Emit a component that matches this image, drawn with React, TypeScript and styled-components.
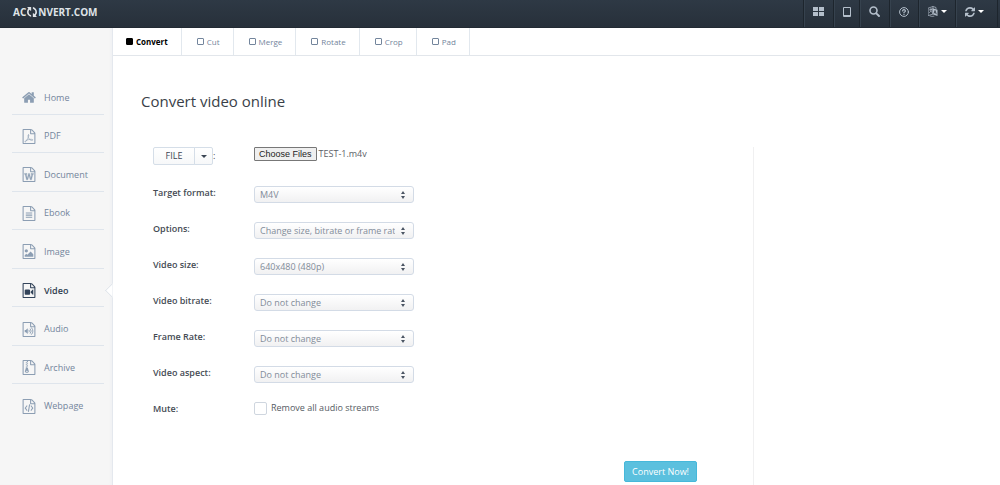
import React from "react";
import styled, { createGlobalStyle, css } from "styled-components";

const GlobalStyle = createGlobalStyle`
  * { box-sizing: border-box; }
  body { margin: 0; background: #fff; color: #3f4650; font: 9px/18px "Open Sans", "Noto Sans", sans-serif; }
  button, input, select { font: inherit; color: inherit; margin: 0; }
  a { color: inherit; text-decoration: none; }
`;

const Page = styled.div`
  display: flex;
  flex-direction: column;
  min-height: 100vh;
`;

const TopBar = styled.header`
  display: flex;
  justify-content: space-between;
  align-items: stretch;
  height: 28px;
  padding: 0 2px 0 13px;
  background: linear-gradient(#2e3945, #27303a);
  border-bottom: 1px solid #222a33;
  color: #b4bfcb;
`;

const Logo = styled.a`
  display: flex;
  align-items: center;
  padding-bottom: 4px;
  font-size: 10px;
  font-weight: 700;
  color: #dfe3e7;
  svg { margin: 0 1px; }
`;

const Tools = styled.div`
  display: flex;
`;

const Tool = styled.button<{ $width: number }>`
  display: flex;
  align-items: center;
  justify-content: center;
  gap: 3px;
  width: ${(p) => p.$width}px;
  padding: 0 0 4px;
  border: 0;
  border-left: 1px solid #1d252d;
  box-shadow: inset 1px 0 0 #36424e;
  background: none;
  &:last-child { padding-right: 5px; border-right: 1px solid #1d252d; }
`;

const Caret = styled.span`
  border: 3px solid transparent;
  border-top-color: currentColor;
  border-bottom: 0;
`;

const WhiteCaret = styled(Caret)`
  color: #fff;
`;

const Body = styled.div`
  display: flex;
  flex: 1;
`;

const Sidebar = styled.nav`
  flex: 0 0 113px;
  padding: 48px 8px 0 12px;
  background: #f6f6f6;
  border-right: 1px solid #e4e8ee;
  box-shadow: inset -2px 0 2px #f1f2f4;
`;

const NavList = styled.ul`
  display: grid;
  grid-auto-rows: 1fr;
  min-height: 347px;
  margin: 0;
  padding: 0;
  list-style: none;
`;

const NavItem = styled.li`
  position: relative;
  display: flex;
  border-bottom: 1px solid #dfe5ec;
  &:last-child { border-bottom-color: transparent; }
`;

const NavLink = styled.a<{ $active?: boolean }>`
  display: flex;
  align-items: center;
  gap: 8px;
  flex: 1;
  padding: 6px 0 0 10px;
  color: #73859c;
  svg { flex: none; color: #8c9eb3; }
  ${(p) => p.$active && css`
    color: #2f3d4f;
    font-weight: 600;
    svg { color: #33445a; }
  `}
`;

const Notch = styled.span`
  position: absolute;
  top: 16px;
  right: -14px;
  width: 11px;
  height: 11px;
  background: #fff;
  border-left: 1px solid #dfe4ea;
  border-bottom: 1px solid #dfe4ea;
  clip-path: polygon(0 0, 100% 100%, 0 100%);
  transform: rotate(45deg);
`;

const Main = styled.main`
  flex: 1;
  min-width: 0;
`;

const Tabs = styled.nav`
  display: flex;
  height: 28px;
  border-bottom: 1px solid #e2e6eb;
`;

const Tab = styled.a<{ $active?: boolean }>`
  display: flex;
  align-items: center;
  gap: 3px;
  padding: 0 13px 0 15px;
  border-right: 1px solid #e2e8ee;
  color: #73859c;
  font-size: 8px;
  &:first-child { padding: 0 13px; }
  ${(p) => p.$active && css`
    color: #000;
    font-weight: 700;
  `}
`;

const TabMark = styled.span<{ $active?: boolean }>`
  width: 7px;
  height: 7px;
  border: 1px solid currentColor;
  border-radius: 1px;
  background: ${(p) => (p.$active ? "currentColor" : "transparent")};
`;

const Title = styled.h1`
  margin: 0;
  padding: 34px 28px 0;
  font-size: 15px;
  line-height: 22px;
  font-weight: 400;
  color: #3a3f48;
`;

const Content = styled.div`
  display: grid;
  grid-template-columns: 641fr 246fr;
  padding-top: 35px;
`;

const Form = styled.form`
  display: flex;
  flex-direction: column;
  min-height: 338px;
  padding: 0 56px 0 40px;
  border-right: 1px solid #f0f0f1;
`;

const Row = styled.div`
  display: grid;
  grid-template-columns: 101px 1fr;
  align-items: start;
  min-height: 36px;
`;

const Label = styled.label`
  padding-top: 1px;
  font-weight: 600;
  color: #454b54;
`;

const FileGroup = styled.div`
  display: flex;
  align-items: center;
`;

const SourceButton = styled.button`
  height: 18px;
  width: 42px;
  padding: 0;
  line-height: 16px;
  border: 1px solid #d5dee8;
  border-radius: 2px 0 0 2px;
  background: linear-gradient(#fff, #f7f8f9);
  color: #3b4654;
`;

const SourceMenu = styled(SourceButton)`
  display: flex;
  align-items: center;
  justify-content: center;
  width: 19px;
  margin-left: -1px;
  border-radius: 0 2px 2px 0;
`;

const FileField = styled.div`
  display: flex;
  align-items: center;
  gap: 2px;
  height: 14px;
  color: #5c6168;
`;

const HiddenFile = styled.input`
  position: absolute;
  width: 1px;
  height: 1px;
  opacity: 0;
`;

const ChooseLabel = styled.label`
  height: 14px;
  padding: 0 4px;
  border: 1px solid #777;
  border-radius: 1px;
  background: #efefef;
  color: #222;
  font: 9px/12px "Liberation Sans", Arial, sans-serif;
  white-space: nowrap;
`;

const SelectBox = styled.div`
  display: grid;
  align-items: center;
  width: 160px;
  margin-top: 3px;
  > * { grid-area: 1 / 1; }
  svg { justify-self: end; margin-right: 9px; color: #4b5563; pointer-events: none; }
`;

const Select = styled.select`
  appearance: none;
  width: 100%;
  height: 17px;
  padding: 0 18px 0 5px;
  border: 1px solid #d3dbe6;
  border-radius: 3px;
  background: linear-gradient(#fff, #f1f1f2);
  color: #828c99;
  line-height: 15px;
`;

const CheckLabel = styled.label`
  display: flex;
  align-items: center;
  gap: 4px;
  color: #555b63;
`;

const Checkbox = styled.input`
  appearance: none;
  width: 13px;
  height: 13px;
  border: 1px solid #cfd6df;
  border-radius: 2px;
  background: #fff;
`;

const Submit = styled.button`
  align-self: flex-end;
  height: 21px;
  margin-top: 26px;
  padding: 0 7px;
  border: 1px solid #46b8da;
  border-radius: 2px;
  background: #5bc0de;
  color: #fff;
`;

const REFRESH =
  "M1511 1056q0 5-1 7-64 268-268 434.5t-478 166.5q-146 0-282.5-55t-243.5-157l-129 129q-19 19-45 19t-45-19-19-45v-448q0-26 19-45t45-19h448q26 0 45 19t19 45-19 45l-137 137q71 66 161 102t187 36q134 0 250-65t186-179q11-17 53-117 8-23 30-23h192q13 0 22.5 9.5t9.5 22.5zm25-800v448q0 26-19 45t-45 19h-448q-26 0-45-19t-19-45 19-45l138-138q-148-137-349-137-134 0-250 65t-186 179q-11 17-53 117-8 23-30 23h-199q-13 0-22.5-9.5t-9.5-22.5v-7q65-268 270-434.5t480-166.5q146 0 284 55.5t245 156.5l130-129q19-19 45-19t45 19 19 45z";
const HOME =
  "M1408 992v480q0 26-19 45t-45 19h-384v-384h-256v384h-384q-26 0-45-19t-19-45v-480q0-1 .5-3t.5-3l575-474 575 474q1 2 1 6zm223-69l-62 74q-8 9-21 11h-3q-13 0-21-7l-692-577-692 577q-12 8-24 7-13-2-21-11l-62-74q-8-10-7-23.5t11-21.5l719-599q32-26 76-26t76 26l244 204v-195q0-14 9-23t23-9h192q14 0 23 9t9 23v408l219 182q10 8 11 21.5t-7 23.5z";
const FILE =
  "M1468 380q28 28 48 76t20 88v1152q0 40-28 68t-68 28h-1344q-40 0-68-28t-28-68v-1600q0-40 28-68t68-28h896q40 0 88 20t76 48zm-444-244v376h376q-10-29-22-41l-313-313q-12-12-41-22zm384 1528v-1024h-416q-40 0-68-28t-28-68v-416h-768v1536h1280z";

const stroke = { fill: "none", stroke: "currentColor", strokeLinecap: "round", strokeLinejoin: "round" } as const;

const fileMarks: Record<string, React.ReactNode> = {
  PDF: (
    <path
      {...stroke}
      strokeWidth="75"
      d="M700 700c-80 0-70 130-20 280 60 170 190 330 350 370 130 30 220-10 200-60-30-70-280-80-520-20-220 50-410 150-430 240-10 60 80 50 150-50 130-180 240-400 310-620 40-110 20-140-40-140z"
    />
  ),
  Document: (
    <path
      stroke="currentColor"
      strokeWidth="40"
      d="M233 768v107h70l164 661h159l128-485q7-20 10-46 2-16 2-24h4l3 24q1 3 3.5 20t5.5 26l128 485h159l164-661h70v-107h-300v107h90l-99 438q-5 20-7 46l-2 21h-4l-3-21q-1-5-4-21t-5-25l-144-545h-114l-144 545q-2 9-4.5 24.500t-3.500 21.500l-4 21h-4l-2-21q-2-26-7-46l-99-438h90v-107h-300z"
    />
  ),
  Ebook: <path d="M384 768h768v128h-768zM384 1024h768v128h-768zM384 1280h768v128h-768z" />,
  Image: (
    <path d="M1280 1216v320h-1024v-192l192-192 128 128 384-384zm-832-192q-80 0-136-56t-56-136 56-136 136-56 136 56 56 136-56 136-136 56z" />
  ),
  Video: (
    <path d="M768 768q52 0 90 38t38 90v384q0 52-38 90t-90 38h-384q-52 0-90-38t-38-90v-384q0-52 38-90t90-38h384zm492 2q20 8 20 30v576q0 22-20 30-8 2-12 2-14 0-23-9l-265-266v-90l265-266q9-9 23-9 4 0 12 2z" />
  ),
  Audio: (
    <>
      <path d="M620 800v576q0 32-32 32-12 0-22-9l-167-167h-131q-12 0-12-12v-264q0-12 12-12h131l167-167q10-9 22-9 32 0 32 32z" />
      <path {...stroke} strokeWidth="110" d="M780 980q90 108 0 216M930 830q220 258 0 516M1080 700q330 388 0 776" />
    </>
  ),
  Archive: (
    <>
      <path d="M512 128h128v128h-128zM384 256h128v128h-128zM512 384h128v128h-128zM384 512h128v128h-128zM512 640h128v128h-128zM384 768h128v128h-128z" />
      <path
        fillRule="evenodd"
        d="M448 896h128q30 0 50 40l120 400q22 70-50 140-74 60-184 60t-184-60q-72-70-50-140l120-400q10-40 50-40zm64 384q-128 0-128 64t128 64 128-64-128-64z"
      />
    </>
  ),
  Webpage: (
    <path d="M480 768q8-11 21-12.500t24 6.500l51 38q11 8 12.500 21t-6.500 24l-182 243 182 243q8 11 6.500 24t-12.500 21l-51 38q-11 8-24 6.500t-21-12.500l-226-301q-14-19 0-38zm802 301q14 19 0 38l-226 301q-8 11-21 12.500t-24-6.500l-51-38q-11-8-12.500-21t6.500-24l182-243-182-243q-8-11-6.500-24t12.500-21l51-38q11-8 24-6.500t21 12.500zm-620 461q-13-2-20.500-13t-5.500-24l138-831q2-13 13-20.500t24-5.500l63 10q13 2 20.500 13t5.500 24l-138 831q-2 13-13 20.500t-24 5.500z" />
  ),
};

const NavIcon = ({ name }: { name: string }) =>
  name === "Home" ? (
    <svg width="14" height="15" viewBox="0 0 1664 1792" fill="currentColor" aria-hidden="true">
      <path d={HOME} />
    </svg>
  ) : (
    <svg width="14" height="15" viewBox="0 0 1536 1792" fill="currentColor" aria-hidden="true">
      <path d={FILE} />
      {fileMarks[name]}
    </svg>
  );

const RefreshIcon = ({ turned }: { turned?: boolean }) => (
  <svg width="10" height="12" viewBox="0 0 1536 1792" fill="currentColor" aria-hidden="true">
    <path d={REFRESH} transform={turned ? "rotate(90 768 896)" : undefined} />
  </svg>
);

const Arrows = () => (
  <svg width="4" height="8" viewBox="0 0 4 8" fill="currentColor" aria-hidden="true">
    <path d="M0 3L2 0L4 3zM0 5h4L2 8z" />
  </svg>
);

const navItems = ["Home", "PDF", "Document", "Ebook", "Image", "Video", "Audio", "Archive", "Webpage"];
const tabs = ["Convert", "Cut", "Merge", "Rotate", "Crop", "Pad"];
const fields = [
  { id: "format", label: "Target format:", value: "M4V" },
  { id: "options", label: "Options:", value: "Change size, bitrate or frame rate" },
  { id: "size", label: "Video size:", value: "640x480 (480p)" },
  { id: "bitrate", label: "Video bitrate:", value: "Do not change" },
  { id: "framerate", label: "Frame Rate:", value: "Do not change" },
  { id: "aspect", label: "Video aspect:", value: "Do not change" },
];

export default function App() {
  return (
    <Page>
      <GlobalStyle />
      <TopBar>
        <Logo href="#">
          AC
          <RefreshIcon turned />
          NVERT.COM
        </Logo>
        <Tools>
          <Tool $width={30} type="button" aria-label="Apps">
            <svg width="11" height="9" viewBox="0 0 11 9" fill="currentColor">
              <path d="M0 0h5v4H0zM6 0h5v4H6zM0 5h5v4H0zM6 5h5v4H6z" />
            </svg>
          </Tool>
          <Tool $width={26} type="button" aria-label="Mobile">
            <svg width="8" height="10" viewBox="0 0 8 10">
              <path
                fill="currentColor"
                fillRule="evenodd"
                d="M1 0h6q1 0 1 1v8q0 1-1 1H1q-1 0-1-1V1q0-1 1-1zM1 1v7h6V1z"
              />
            </svg>
          </Tool>
          <Tool $width={30} type="button" aria-label="Search">
            <svg width="11" height="11" viewBox="0 0 11 11" {...stroke}>
              <circle cx="4.500" cy="4.500" r="3.500" strokeWidth="1.600" />
              <path d="M7.300 7.300L10 10" strokeWidth="1.900" />
            </svg>
          </Tool>
          <Tool $width={29} type="button" aria-label="Help">
            <svg width="10" height="10" viewBox="0 0 10 10" {...stroke}>
              <circle cx="5" cy="5" r="4.400" />
              <path d="M3.600 3.900Q3.800 2.700 5 2.700T6.400 3.900Q6.400 4.600 5 5.300V5.800M5 7.400V7.500" strokeWidth="1.200" />
            </svg>
          </Tool>
          <Tool $width={37} type="button" aria-label="Language">
            <svg width="10" height="11" viewBox="0 0 10 11">
              <path d="M4.500 2.300L9.500 3.800V10L4.500 8.300z" fill="currentColor" />
              <path d="M.5 2L5 .5V8L.5 9.500zM5 .5L8 1.500V3M2 10q2 .8 4 .2" {...stroke} strokeWidth=".7" />
              <path d="M1.500 3.800L4 3M2.800 2.600V3.500M3.700 3.200Q3 6 1.500 6.700M2 4.500L4 6.200" {...stroke} strokeWidth=".7" />
              <path d="M6 7.500L7 4.500L8.300 8.200M6.400 6.500L7.700 6.900" fill="none" stroke="#2a343f" strokeWidth=".8" />
            </svg>
            <WhiteCaret />
          </Tool>
          <Tool $width={43} type="button" aria-label="Refresh">
            <RefreshIcon />
            <WhiteCaret />
          </Tool>
        </Tools>
      </TopBar>
      <Body>
        <Sidebar>
          <NavList>
            {navItems.map((name) => (
              <NavItem key={name}>
                <NavLink href="#" $active={name === "Video"}>
                  <NavIcon name={name} />
                  {name}
                </NavLink>
                {name === "Video" && <Notch />}
              </NavItem>
            ))}
          </NavList>
        </Sidebar>
        <Main>
          <Tabs>
            {tabs.map((name, i) => (
              <Tab key={name} href="#" $active={i === 0}>
                <TabMark $active={i === 0} />
                {name}
              </Tab>
            ))}
          </Tabs>
          <Title>Convert video online</Title>
          <Content>
            <Form onSubmit={(e) => e.preventDefault()}>
              <Row>
                <FileGroup>
                  <SourceButton type="button">FILE</SourceButton>
                  <SourceMenu type="button" aria-label="Choose source">
                    <Caret />
                  </SourceMenu>
                  :
                </FileGroup>
                <FileField>
                  <HiddenFile id="file" type="file" multiple />
                  <ChooseLabel htmlFor="file">Choose Files</ChooseLabel>
                  <span>TEST-1.m4v</span>
                </FileField>
              </Row>
              {fields.map((f) => (
                <Row key={f.id}>
                  <Label htmlFor={f.id}>{f.label}</Label>
                  <SelectBox>
                    <Select id={f.id}>
                      <option>{f.value}</option>
                    </Select>
                    <Arrows />
                  </SelectBox>
                </Row>
              ))}
              <Row>
                <Label htmlFor="mute">Mute:</Label>
                <CheckLabel>
                  <Checkbox id="mute" type="checkbox" />
                  Remove all audio streams
                </CheckLabel>
              </Row>
              <Submit type="submit">Convert Now!</Submit>
            </Form>
          </Content>
        </Main>
      </Body>
    </Page>
  );
}
